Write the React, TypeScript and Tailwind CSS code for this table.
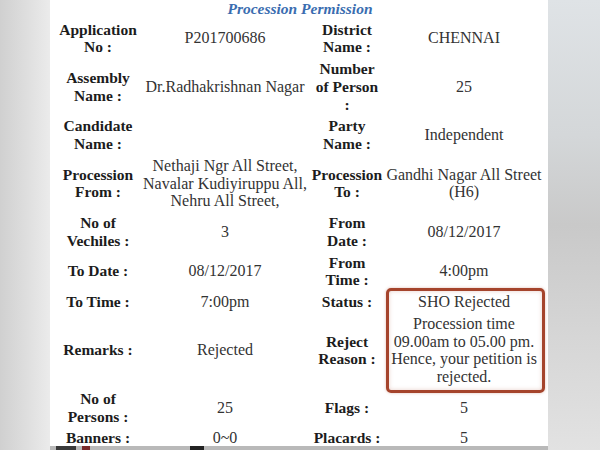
import React from "react";

type Cell = { label: string[]; value: string[] };
type Row = { l: Cell; r: Cell };

const rows: Row[] = [
  { l: { label: ["Application", "No :"], value: ["P201700686"] }, r: { label: ["District", "Name :"], value: ["CHENNAI"] } },
  { l: { label: ["Assembly", "Name :"], value: ["Dr.Radhakrishnan Nagar"] }, r: { label: ["Number", "of Person", ":"], value: ["25"] } },
  { l: { label: ["Candidate", "Name :"], value: [] }, r: { label: ["Party", "Name :"], value: ["Independent"] } },
  {
    l: { label: ["Procession", "From :"], value: ["Nethaji Ngr All Street,", "Navalar Kudiyiruppu All,", "Nehru All Street,"] },
    r: { label: ["Procession", "To :"], value: ["Gandhi Nagar All Street", "(H6)"] },
  },
  { l: { label: ["No of", "Vechiles :"], value: ["3"] }, r: { label: ["From", "Date :"], value: ["08/12/2017"] } },
  { l: { label: ["To Date :"], value: ["08/12/2017"] }, r: { label: ["From", "Time :"], value: ["4:00pm"] } },
  { l: { label: ["To Time :"], value: ["7:00pm"] }, r: { label: ["Status :"], value: ["SHO Rejected"] } },
  {
    l: { label: ["Remarks :"], value: ["Rejected"] },
    r: { label: ["Reject", "Reason :"], value: ["Procession time", "09.00am to 05.00 pm.", "Hence, your petition is", "rejected."] },
  },
  { l: { label: ["No of", "Persons :"], value: ["25"] }, r: { label: ["Flags :"], value: ["5"] } },
  { l: { label: ["Banners :"], value: ["0~0"] }, r: { label: ["Placards :"], value: ["5"] } },
];

function Lines({ lines }: { lines: string[] }) {
  return (
    <>
      {lines.map((t, i) => (
        <div key={i} className="whitespace-nowrap">
          {t}
        </div>
      ))}
    </>
  );
}

function Label({ lines }: { lines: string[] }) {
  return (
    <div className="flex flex-col items-center justify-center py-[2px] text-center font-bold text-[15.5px] leading-[17.75px] text-[#1c1c1c]">
      <Lines lines={lines} />
    </div>
  );
}

function Value({ lines }: { lines: string[] }) {
  return (
    <div className="flex flex-col items-center justify-center py-[2px] text-center text-[16px] leading-[17.75px] text-[#333333]">
      <Lines lines={lines} />
    </div>
  );
}

export default function App() {
  return (
    <div className="relative flex h-[450px] w-[600px] overflow-hidden bg-[linear-gradient(180deg,#eeeeee_0%,#d6d6d6_35%,#d9d9d9_60%,#e4e4e4_100%)] font-['Liberation_Serif',serif]">
      <div className="h-full w-[50px] bg-[linear-gradient(90deg,#d0d0d0_0%,#e0e0e0_60%,#ebebeb_100%)]" />
      <div className="flex h-full w-[498px] flex-col">
        <div className="relative h-[446px] w-[498px] bg-white pl-[6px] pr-[4px]">
          <div className="text-center text-[15.5px] font-bold italic leading-[17.6px] text-[#3a6db0]">
            Procession Permission
          </div>
          <div className="mt-[1px] grid grid-cols-[84px_170px_74px_160px]">
            {rows.map((row, i) => (
              <React.Fragment key={i}>
                <Label lines={row.l.label} />
                <Value lines={row.l.value} />
                <Label lines={row.r.label} />
                <Value lines={row.r.value} />
              </React.Fragment>
            ))}
          </div>
          <div className="pointer-events-none absolute left-[336px] top-[288px] h-[105px] w-[159px] rounded-[5px] border-[3px] border-[#a5442c] shadow-[0_0_3px_rgba(165,68,44,0.35),inset_0_0_4px_rgba(165,68,44,0.25)]" />
        </div>
        <div className="flex h-[4px] w-full bg-[#b9b9b9]">
          <div className="ml-[6px] h-full w-[20px] bg-[#3a3a3a]" />
          <div className="ml-[6px] h-full w-[8px] bg-[#7a2a2a]" />
          <div className="ml-[100px] h-full w-[14px] bg-[#222222]" />
        </div>
      </div>
      <div className="h-full flex-1 bg-[linear-gradient(180deg,#dfe3e6_0%,#d4d7d9_30%,#c9c9c9_50%,#d6d6d6_75%,#e2e2e2_100%)]" />
    </div>
  );
}
